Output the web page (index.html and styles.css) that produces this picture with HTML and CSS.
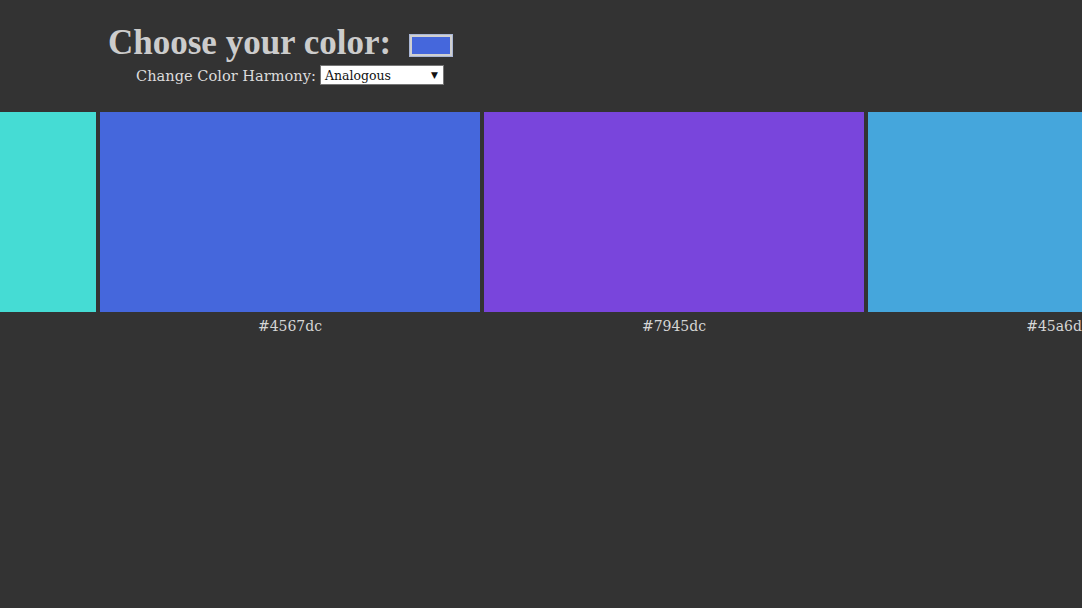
FILE: index.html
```html
<!DOCTYPE html>
<html>
<head>
<meta charset="utf-8">
<link rel="stylesheet" href="styles.css">
</head>
<body>
<header class="header">
  <div class="title-row">
    <h1 class="title">Choose your color:</h1>
    <div class="color-input"><div class="color-fill"></div></div>
  </div>
  <div class="harmony-row">
    <span class="harmony-label">Change Color Harmony:</span>
    <div class="select"><span>Analogous</span><span class="arrow">▼</span></div>
  </div>
</header>
<section class="swatches">
  <div class="swatch"><div class="chip" style="background:#45dcd4"></div><div class="hex">#45dcd4</div></div>
  <div class="swatch"><div class="chip" style="background:#4567dc"></div><div class="hex">#4567dc</div></div>
  <div class="swatch"><div class="chip" style="background:#7945dc"></div><div class="hex">#7945dc</div></div>
  <div class="swatch"><div class="chip" style="background:#45a6dc"></div><div class="hex">#45a6dc</div></div>
</section>
</body>
</html>
```
FILE: styles.css
```css
html, body {
  margin: 0;
  background: #333333;
  height: 100%;
}
body {
  font-family: "DejaVu Serif", "Liberation Serif", serif;
  color: #d6d6d6;
  overflow: hidden;
}
.header {
  padding: 24px 0 0 108px;
  height: 112px;
  box-sizing: border-box;
}
.title-row {
  display: flex;
  align-items: center;
  gap: 18px;
}
.title {
  margin: 0;
  font-family: "Liberation Serif", serif;
  font-size: 35px;
  font-weight: bold;
  line-height: 38px;
  color: #cccccc;
}
.color-input {
  width: 44px;
  height: 23px;
  box-sizing: border-box;
  border: 1px solid #a9b6d6;
  background: #d0d0d0;
  padding: 2px;
  margin-top: 4px;
}
.color-fill {
  width: 100%;
  height: 100%;
  background: #4567dc;
}
.harmony-row {
  display: flex;
  align-items: center;
  gap: 4px;
  padding-left: 28px;
  margin-top: 3px;
}
.harmony-label {
  font-size: 14.6px;
  color: #dcdcdc;
}
.select {
  width: 124px;
  height: 20px;
  box-sizing: border-box;
  background: #fff;
  border: 1px solid #767676;
  color: #111;
  font-size: 12.5px;
  display: flex;
  align-items: center;
  justify-content: space-between;
  padding: 0 5px 0 4px;
}
.arrow {
  font-size: 9px;
  font-family: "DejaVu Sans", sans-serif;
}
.swatches {
  display: flex;
  gap: 4px;
  margin-left: -284px;
}
.swatch {
  flex: 0 0 380px;
}
.chip {
  height: 200px;
}
.hex {
  text-align: center;
  font-size: 14px;
  margin-top: 6px;
  color: #d6d6d6;
}
```
